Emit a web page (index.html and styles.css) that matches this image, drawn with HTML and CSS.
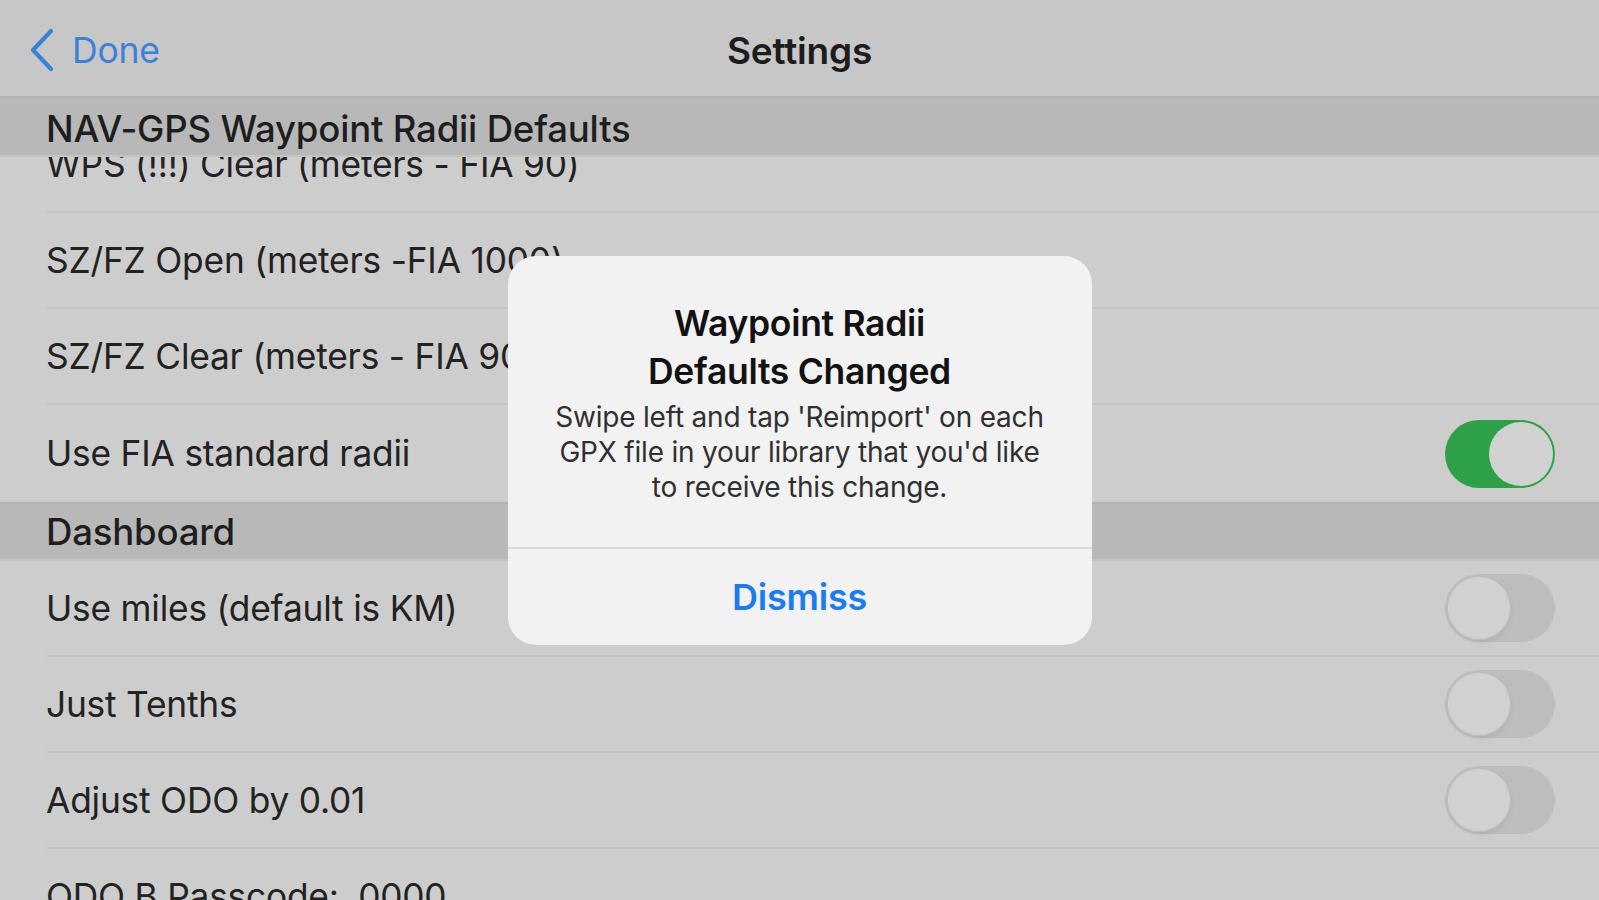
FILE: index.html
```html
<!DOCTYPE html>
<html lang="en">
<head>
<meta charset="utf-8">
<title>Settings</title>
<link rel="stylesheet" href="styles.css">
</head>
<body>
<div class="screen">
  <header class="navbar">
    <div class="nav-left">
      <a class="back" href="#">
        <svg class="chevron" width="26" height="44" viewBox="0 0 26 44" aria-hidden="true">
          <path d="M22 3 L4 22 L22 41" fill="none" stroke="currentColor" stroke-width="4.2" stroke-linecap="round" stroke-linejoin="round"/>
        </svg>
        <span class="back-label">Done</span>
      </a>
    </div>
    <h1 class="nav-title">Settings</h1>
    <div class="nav-right"></div>
  </header>

  <main class="list">
    <section class="group">
      <div class="section-header first">NAV-GPS Waypoint Radii Defaults</div>
      <div class="row row-under"><span class="label">WPS (!!!) Clear (meters - FIA 90)</span></div>
      <div class="row"><span class="label">SZ/FZ Open (meters -FIA 1000)</span></div>
      <div class="row"><span class="label">SZ/FZ Clear (meters - FIA 90)</span></div>
      <div class="row row-last"><span class="label">Use FIA standard radii</span><span class="toggle on"><span class="knob"></span></span></div>
    </section>
    <section class="group">
      <div class="section-header">Dashboard</div>
      <div class="row"><span class="label">Use miles (default is KM)</span><span class="toggle"><span class="knob"></span></span></div>
      <div class="row"><span class="label">Just Tenths</span><span class="toggle"><span class="knob"></span></span></div>
      <div class="row"><span class="label">Adjust ODO by 0.01</span><span class="toggle"><span class="knob"></span></span></div>
      <div class="row"><span class="label">ODO B Passcode:&nbsp; 0000</span></div>
    </section>
  </main>

  <div class="overlay">
    <div class="alert" role="alertdialog">
      <div class="alert-body">
        <h2 class="alert-title">Waypoint Radii<br>Defaults Changed</h2>
        <p class="alert-message">Swipe left and tap 'Reimport' on each GPX file in your library that you'd like to receive this change.</p>
      </div>
      <button class="alert-button">Dismiss</button>
    </div>
  </div>
</div>
</body>
</html>
```

FILE: styles.css
```css
* { box-sizing: border-box; }
html, body { margin: 0; padding: 0; }
body {
  width: 1599px;
  height: 900px;
  overflow: hidden;
  background: #cdcdcd;
  font-family: "Inter", "Liberation Sans", sans-serif;
  color: #1e1e1e;
}
.screen {
  position: relative;
  width: 1599px;
  height: 900px;
  overflow: hidden;
  display: flex;
  flex-direction: column;
}

/* Navigation bar */
.navbar {
  height: 96px;
  flex: none;
  background: #c7c7c7;
  display: grid;
  grid-template-columns: 1fr auto 1fr;
  align-items: center;
  padding-top: 4px;
  position: relative;
  z-index: 2;
}
.nav-left { padding-left: 29px; }
.back {
  display: inline-flex;
  align-items: center;
  gap: 17px;
  margin-top: 4px;
  color: #3a81da;
  text-decoration: none;
}
.chevron { display: block; margin-top: 0; }
.back-label {
  font-size: 35.5px;
  font-weight: 400;
  letter-spacing: -0.2px;
}
.nav-title {
  margin: 0;
  font-size: 37px;
  font-weight: 600;
  color: #1c1c1c;
  letter-spacing: -0.2px;
}

/* List */
.list {
  flex: 1;
  background: #cdcdcd;
  overflow: hidden;
}
.section-header {
  position: relative;
  z-index: 1;
  background: #b8b8b8;
  border-top: 2px solid #b2b2b2;
  border-bottom: 2px solid #c3c3c3;
  height: 61px;
  padding-left: 46px;
  display: flex;
  align-items: center;
  font-size: 36.6px;
  font-weight: 500;
  color: #1e1e1e;
  letter-spacing: -0.2px;
}
.section-header.first { padding-top: 4px; }
.group + .group .section-header { height: 59px; }
.row {
  height: 96px;
  margin-left: 46px;
  padding-right: 44px;
  border-bottom: 2px solid #c5c5c5;
  display: flex;
  align-items: center;
  justify-content: space-between;
  font-size: 35.3px;
  letter-spacing: -0.2px;
  color: #222;
}
.row-under { margin-top: -40px; }
.row-last { border-bottom: none; height: 97px; }
.label { padding-top: 0; }

/* Toggle switch */
.toggle {
  width: 110px;
  height: 68px;
  border-radius: 34px;
  background: #bdbdbd;
  padding: 3px;
  display: flex;
  align-items: center;
  justify-content: flex-start;
}
.toggle .knob {
  width: 62px;
  height: 62px;
  border-radius: 50%;
  background: #d1d1d1;
  box-shadow: 0 0 0 1.5px #bcbcbc, 1px 3px 5px rgba(0,0,0,0.08);
}
.toggle.on {
  background: #2ea148;
  justify-content: flex-end;
}
.toggle.on .knob {
  box-shadow: 0 0 0 1px #c7d9cb;
}

/* Alert */
.overlay {
  position: absolute;
  inset: 0;
  z-index: 5;
  display: flex;
  align-items: center;
  justify-content: center;
}
.alert {
  width: 584px;
  background: #f2f2f2;
  border-radius: 28px;
  overflow: hidden;
  display: flex;
  flex-direction: column;
}
.alert-body {
  padding: 44px 40px 42px;
  text-align: center;
  border-bottom: 2px solid #dadada;
}
.alert-title {
  margin: 0;
  font-size: 35.5px;
  line-height: 48px;
  font-weight: 600;
  color: #121212;
  letter-spacing: -0.3px;
}
.alert-message {
  margin: 4px 0 0;
  font-size: 28px;
  line-height: 35px;
  color: #303030;
  letter-spacing: -0.2px;
}
.alert-button {
  height: 96px;
  border: none;
  background: transparent;
  font-family: inherit;
  font-size: 36px;
  font-weight: 600;
  color: #1b7cf0;
  padding: 0;
  letter-spacing: -0.2px;
}
```
